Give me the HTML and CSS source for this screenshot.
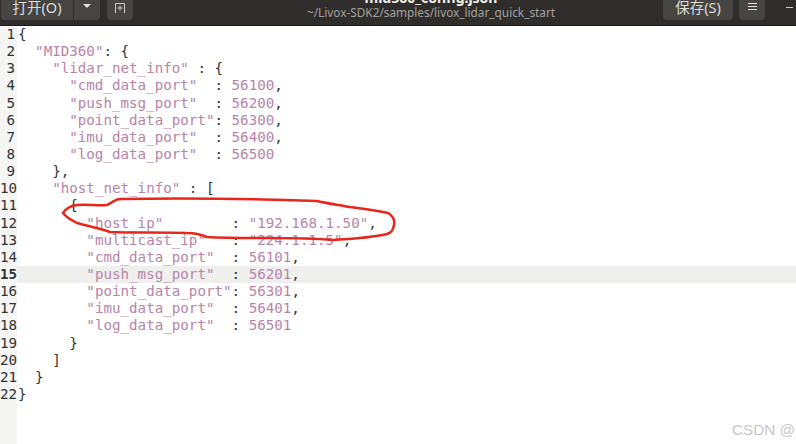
FILE: index.html
```html
<!DOCTYPE html>
<html lang="zh">
<head>
<meta charset="utf-8">
<title>mid360_config.json</title>
<link rel="stylesheet" href="styles.css">
</head>
<body>
<div class="window">
  <header class="bar">
    <div class="group">
      <button class="btn open">打开(O)</button>
      <button class="btn arrow"><span class="tri"></span></button>
    </div>
    <button class="btn newtab">
      <svg width="12" height="10" viewBox="0 0 12 10"><path d="M1.500 10V.5h9V10M6 2.500v5M3.500 5h5" fill="none" stroke="#cfcdc9" stroke-width="1"/></svg>
    </button>
    <div class="title">
      <div class="name">mid360_config.json</div>
      <div class="path">~/Livox-SDK2/samples/livox_lidar_quick_start</div>
    </div>
    <button class="btn save">保存(S)</button>
    <button class="btn menu">
      <svg width="9" height="7" viewBox="0 0 9 7"><path d="M0 .5h9M0 3.500h9M0 6.500h9" stroke="#e4e2de" stroke-width="1"/></svg>
    </button>
    <div class="minimize"></div>
  </header>
  <main class="editor">
    <div class="gutter">
      <div>1</div><div>2</div><div>3</div><div>4</div><div>5</div><div>6</div><div>7</div><div>8</div><div>9</div><div>10</div><div>11</div><div>12</div><div>13</div><div>14</div><div class="cur">15</div><div>16</div><div>17</div><div>18</div><div>19</div><div>20</div><div>21</div><div>22</div>
    </div>
    <div class="code">
      <div class="ln">{</div>
      <div class="ln">  <i>"MID360"</i>: {</div>
      <div class="ln">    <i>"lidar_net_info"</i> : {</div>
      <div class="ln">      <i>"cmd_data_port"</i>  : <i>56100</i>,</div>
      <div class="ln">      <i>"push_msg_port"</i>  : <i>56200</i>,</div>
      <div class="ln">      <i>"point_data_port"</i>: <i>56300</i>,</div>
      <div class="ln">      <i>"imu_data_port"</i>  : <i>56400</i>,</div>
      <div class="ln">      <i>"log_data_port"</i>  : <i>56500</i></div>
      <div class="ln">    },</div>
      <div class="ln">    <i>"host_net_info"</i> : [</div>
      <div class="ln">      {</div>
      <div class="ln">        <i>"host_ip"</i>        : <i>"192.168.1.50"</i>,</div>
      <div class="ln">        <i>"multicast_ip"</i>   : <i>"224.1.1.5"</i>,</div>
      <div class="ln">        <i>"cmd_data_port"</i>  : <i>56101</i>,</div>
      <div class="ln cur">        <i>"push_msg_port"</i>  : <i>56201</i>,</div>
      <div class="ln">        <i>"point_data_port"</i>: <i>56301</i>,</div>
      <div class="ln">        <i>"imu_data_port"</i>  : <i>56401</i>,</div>
      <div class="ln">        <i>"log_data_port"</i>  : <i>56501</i></div>
      <div class="ln">      }</div>
      <div class="ln">    ]</div>
      <div class="ln">  }</div>
      <div class="ln">}</div>
    </div>
  </main>
  <svg class="lasso" width="796" height="444" viewBox="0 0 796 444"><path d="M63 213C66 208 70 206 77 205C87 204 98 206 107 205C112 203 115 199 120 199C180 198 260 199 317 201C330 204 340 205 350 207C365 209 378 211 388 213C393 216 395 220 394 225C393 231 391 233 387 234C370 238 350 239 333 240C310 238 290 238 267 238C245 238 225 238 207 237C200 234 195 233 187 233C160 232 135 233 110 232C98 228 88 226 77 223C71 220 66 217 63 213Z" fill="none" stroke="#e8261c" stroke-width="2.500"/></svg>
  <div class="mark">CSDN @</div>
</div>
</body>
</html>
```
FILE: styles.css
```css
html, body { margin: 0; padding: 0; }
body { width: 796px; height: 444px; overflow: hidden; background: #fff; }
.window { position: relative; width: 796px; height: 444px; display: flex; flex-direction: column; overflow: hidden; }
.bar {
  height: 26px; flex: none; box-sizing: border-box;
  background: #2e2d2b; border-bottom: 1px solid #1b1a19;
  display: flex; align-items: flex-end; padding: 0 0 5px 1px;
  font-family: "Noto Sans CJK SC", "Noto Sans", sans-serif; color: #dcdad6;
  position: relative;
}
.btn {
  border: 0; padding: 0; margin: 0; height: 25px; background: #464542; color: #dedcd8;
  font-family: "Noto Sans", "Noto Sans CJK SC", sans-serif; font-size: 14.500px; line-height: 20px;
  border-radius: 0 0 4px 4px; display: flex; align-items: flex-end; justify-content: center;
}
.group { display: flex; gap: 1px; }
.open { width: 72px; border-radius: 0 0 0 4px; padding-bottom: 3px; box-sizing: border-box; }
.arrow { width: 26px; border-radius: 0 0 4px 0; padding-bottom: 12px; box-sizing: border-box; }
.tri { width: 0; height: 0; border-left: 4px solid transparent; border-right: 4px solid transparent; border-top: 4px solid #e4e2de; }
.newtab { width: 26px; margin-left: 7px; padding-bottom: 7px; box-sizing: border-box; }
.title { flex: 1; height: 25px; position: relative; text-align: center; }
.name { position: absolute; left: 0; right: 0; bottom: 15px; font-size: 14px; font-weight: 700; color: #f2f0ec; line-height: 14px; font-family: "Noto Sans", sans-serif; padding-left: 66px; }
.path { position: absolute; left: 0; right: 0; bottom: 0; font-size: 11.800px; line-height: 15px; color: #a3a19d; font-family: "Noto Sans", sans-serif; padding-left: 66px; }
.save { width: 70px; padding-bottom: 3px; box-sizing: border-box; }
.menu { width: 26px; margin-left: 6px; padding-bottom: 10px; box-sizing: border-box; }
.minimize { width: 7px; height: 1px; background: #cfcdc9; margin: 0 3px 12px 21px; flex: none; }
.editor { flex: 1; display: flex; font-family: "DejaVu Sans Mono", monospace; font-size: 14.200px; line-height: 17.150px; color: #2e3436; min-height: 0; }
.gutter { width: 17px; flex: none; background: #f5f5f4; box-sizing: border-box; text-align: right; }
.gutter div { height: 17.150px; width: 15px; }
.gutter .cur { font-weight: 700; }
.code { flex: 1; min-width: 0; }
.ln { height: 17.150px; padding-left: 1px; white-space: pre; }
.ln.cur { background: #efefee; }
.ln i { font-style: normal; color: #b884a9; }
.lasso { position: absolute; left: 0; top: 0; pointer-events: none; }
.mark { position: absolute; left: 732px; top: 421px; font-family: "Liberation Sans", sans-serif; font-size: 15.300px; line-height: 18px; color: #c8c8c8; white-space: nowrap; }
```
